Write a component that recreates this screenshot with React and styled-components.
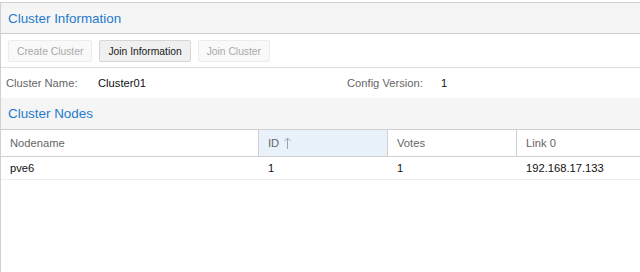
import React from "react";
import styled, { createGlobalStyle } from "styled-components";

const Global = createGlobalStyle`
  html, body { margin: 0; padding: 0; background: #fff; }
  body { font-family: "Liberation Sans", Arial, sans-serif; font-size: 11.2px; color: #000; }
`;

const Page = styled.div`
  width: 640px;
  height: 272px;
  padding-top: 2px;
  box-sizing: border-box;
  overflow: hidden;
`;

const Panel = styled.div`
  border-top: 1px solid #d0d0d0;
  border-left: 1px solid #d0d0d0;
  height: 100%;
  box-sizing: border-box;
`;

const Header = styled.div`
  height: ${(p) => p.$h}px;
  background: #f5f5f5;
  border-bottom: 1px solid #d0d0d0;
  display: flex;
  align-items: center;
  padding-left: 7px;
`;

const Title = styled.span`
  font-size: 13.4px;
  color: #1f7bcc;
`;

const Toolbar = styled.div`
  height: 22px;
  padding: 6px 7px 5px;
  display: flex;
  gap: 7px;
  border-bottom: 1px solid #dedede;
`;

const Button = styled.button`
  height: 22px;
  padding: 0 8px;
  font-family: inherit;
  font-size: 10.3px;
  border-radius: 2px;
  border: 1px solid ${(p) => (p.disabled ? "#ececec" : "#d6d6d6")};
  background: ${(p) => (p.disabled ? "#f9f9f9" : "#f0f0f0")};
  color: ${(p) => (p.disabled ? "#a9a9a9" : "#1a1a1a")};
  cursor: default;
`;

const InfoRow = styled.div`
  height: 30px;
  display: flex;
  align-items: center;
  padding-left: 5px;
`;

const Field = styled.div`
  display: flex;
  width: ${(p) => p.$w}px;
`;

const Label = styled.span`
  width: ${(p) => p.$w}px;
  color: #666;
`;

const Value = styled.span`
  color: #111;
`;

const Grid = styled.div`
  display: grid;
  grid-template-columns: 258px 129px 129px 1fr;
`;

const HeadCell = styled.div`
  height: 26px;
  display: flex;
  align-items: center;
  padding-left: 9px;
  gap: 5px;
  color: #666;
  border-bottom: 1px solid #d0d0d0;
  border-right: ${(p) => (p.$last ? "none" : "1px solid #d0d0d0")};
  background: ${(p) => (p.$sorted ? "#e9f2fb" : "#fff")};
`;

const Cell = styled.div`
  height: 22px;
  display: flex;
  align-items: center;
  padding-left: 9px;
  color: #111;
  border-bottom: 1px solid #ececec;
`;

const SortArrow = () => (
  <svg width="7" height="12" viewBox="0 0 7 12" fill="none" stroke="#9aa4ad" strokeWidth="1">
    <path d="M3.5 1 V12 M0.5 4 L3.5 1 L6.5 4" />
  </svg>
);

const columns = [
  { key: "name", label: "Nodename" },
  { key: "id", label: "ID", sorted: true },
  { key: "votes", label: "Votes" },
  { key: "link", label: "Link 0" },
];

const rows = [{ name: "pve6", id: "1", votes: "1", link: "192.168.17.133" }];

export default function App() {
  return (
    <>
      <Global />
      <Page>
        <Panel>
          <Header $h={30}>
            <Title>Cluster Information</Title>
          </Header>
          <Toolbar>
            <Button disabled>Create Cluster</Button>
            <Button>Join Information</Button>
            <Button disabled>Join Cluster</Button>
          </Toolbar>
          <InfoRow>
            <Field $w={341}>
              <Label $w={92}>Cluster Name:</Label>
              <Value>Cluster01</Value>
            </Field>
            <Field $w={200}>
              <Label $w={94}>Config Version:</Label>
              <Value>1</Value>
            </Field>
          </InfoRow>
          <Header $h={31}>
            <Title>Cluster Nodes</Title>
          </Header>
          <Grid>
            {columns.map((c, i) => (
              <HeadCell key={c.key} $sorted={c.sorted} $last={i === columns.length - 1}>
                {c.label}
                {c.sorted && <SortArrow />}
              </HeadCell>
            ))}
            {rows.map((r) =>
              columns.map((c) => <Cell key={r.name + c.key}>{r[c.key]}</Cell>)
            )}
          </Grid>
        </Panel>
      </Page>
    </>
  );
}
